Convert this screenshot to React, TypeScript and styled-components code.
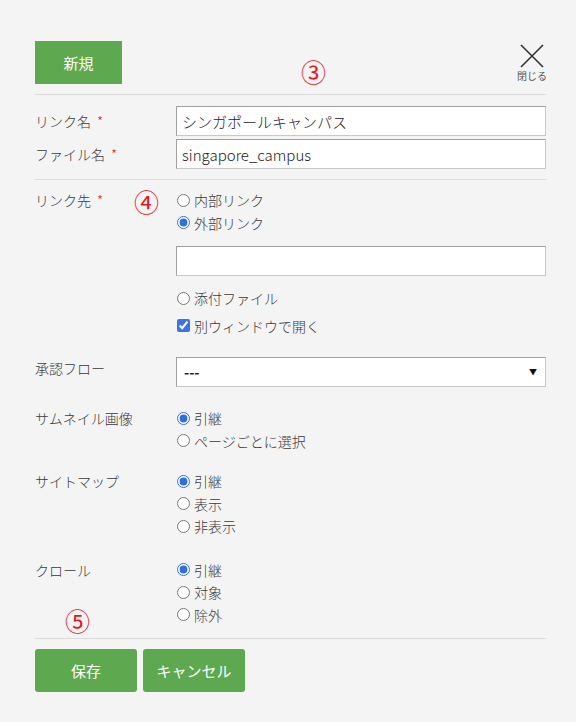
import styled, { createGlobalStyle } from 'styled-components';

const GlobalStyle = createGlobalStyle`
  html, body {
    margin: 0;
    padding: 0;
    background: #f4f4f4;
  }
  body {
    font-family: "Noto Sans CJK JP", "Noto Sans", sans-serif;
    font-weight: 300;
    color: #3a3a3a;
  }
`;

interface RadioGroupProps {
  name: string;
  options: string[];
  checked: number;
}

const RadioGroup: React.FC<RadioGroupProps> = ({ name, options, checked }) => (
  <OptionList>
    {options.map((opt, i) => (
      <OptionLabel key={opt}>
        <Radio type='radio' name={name} defaultChecked={i === checked} />
        {opt}
      </OptionLabel>
    ))}
  </OptionList>
);

const App: React.FC = () => {
  return (
    <Page>
      <GlobalStyle />
      <Header>
        <NewButton type='button'>新規</NewButton>
        <Close type='button'>
          <svg width='26' height='24' viewBox='0 0 26 24'>
            <path d='M2 1 L24 23 M24 1 L2 23' stroke='#333' strokeWidth='1.6' fill='none' />
          </svg>
          <CloseText>閉じる</CloseText>
        </Close>
        <Marker style={{ left: 266, top: 18 }}>③</Marker>
      </Header>

      <Section>
        <FieldRow>
          <Label>
            リンク名<Required>*</Required>
          </Label>
          <TextInput defaultValue='シンガポールキャンパス' />
        </FieldRow>
        <FieldRow>
          <Label>
            ファイル名<Required>*</Required>
          </Label>
          <TextInput defaultValue='singapore_campus' />
        </FieldRow>
      </Section>

      <Section $last>
        <Row $gap={9}>
          <Label $plain>
            リンク先<Required>*</Required>
          </Label>
          <Content>
            <RadioGroup name='link' options={['内部リンク', '外部リンク']} checked={1} />
            <TextInput $spaced />
            <OptionLabel>
              <Radio type='radio' name='link' />
              添付ファイル
            </OptionLabel>
            <CheckLabel>
              <Check type='checkbox' defaultChecked />
              別ウィンドウで開く
            </CheckLabel>
          </Content>
          <Marker style={{ left: 99, top: 0 }}>④</Marker>
        </Row>

        <Row $gap={20}>
          <Label $plain>承認フロー</Label>
          <SelectWrap>
            <Select defaultValue='---'>
              <option>---</option>
            </Select>
          </SelectWrap>
        </Row>

        <Row $gap={20}>
          <Label $plain>サムネイル画像</Label>
          <RadioGroup name='thumb' options={['引継', 'ページごとに選択']} checked={0} />
        </Row>

        <Row $gap={18}>
          <Label $plain>サイトマップ</Label>
          <RadioGroup name='sitemap' options={['引継', '表示', '非表示']} checked={0} />
        </Row>

        <Row $gap={21}>
          <Label $plain>クロール</Label>
          <RadioGroup name='crawl' options={['引継', '対象', '除外']} checked={0} />
          <Marker style={{ left: 30, top: 49 }}>⑤</Marker>
        </Row>
      </Section>

      <Footer>
        <ActionButton type='button'>保存</ActionButton>
        <ActionButton type='button'>キャンセル</ActionButton>
      </Footer>
    </Page>
  );
};

export default App;

const Page = styled.div`
  padding: 41px 30px 30px 35px;
`;

const Header = styled.div`
  position: relative;
  display: flex;
  justify-content: space-between;
  align-items: flex-start;
  padding-bottom: 10px;
  border-bottom: 1px solid #dcdcdc;
`;

const NewButton = styled.button`
  width: 87px;
  height: 43px;
  border: none;
  border-radius: 0;
  background: #5ea84f;
  color: #fff;
  font-family: inherit;
  font-weight: 400;
  font-size: 15px;
  cursor: pointer;
`;

const Close = styled.button`
  display: flex;
  flex-direction: column;
  align-items: center;
  margin-top: 3px;
  margin-right: -1px;
  padding: 0;
  border: none;
  background: none;
  cursor: pointer;
`;

const CloseText = styled.span`
  margin-top: 2px;
  font-family: "Noto Sans CJK JP", sans-serif;
  font-size: 10px;
  color: #555;
  line-height: 12px;
`;

const Marker = styled.span`
  position: absolute;
  font-family: "Noto Sans CJK JP", sans-serif;
  font-weight: 400;
  font-size: 25px;
  line-height: 25px;
  color: #e8141b;
`;

const Section = styled.div<{ $last?: boolean }>`
  display: flex;
  flex-direction: column;
  gap: ${(p) => (p.$last ? '0' : '3px')};
  padding: ${(p) => (p.$last ? '0 0 12px' : '11px 0 10px')};
  border-bottom: 1px solid #dcdcdc;
`;

const FieldRow = styled.div`
  display: grid;
  grid-template-columns: 141px 1fr;
  align-items: center;
`;

const Row = styled.div<{ $gap: number }>`
  position: relative;
  display: grid;
  grid-template-columns: 141px 1fr;
  align-items: start;
  margin-top: ${(p) => p.$gap}px;
`;

const Label = styled.div<{ $plain?: boolean }>`
  font-size: 14px;
  line-height: 22px;
  color: #3a3a3a;
  align-self: ${(p) => (p.$plain ? 'start' : 'center')};
`;

const Required = styled.span`
  color: #d9262b;
  margin-left: 6px;
`;

const Content = styled.div`
  display: flex;
  flex-direction: column;
`;

const OptionList = styled.div`
  display: flex;
  flex-direction: column;
`;

const OptionLabel = styled.label`
  display: flex;
  align-items: center;
  font-size: 14px;
  line-height: 22.5px;
  color: #3a3a3a;
`;

const Radio = styled.input`
  width: 13px;
  height: 13px;
  margin: 0 4px 0 1px;
  accent-color: #2f6fe0;
`;

const CheckLabel = styled(OptionLabel)`
  margin-top: 5px;
`;

const Check = styled.input`
  width: 13px;
  height: 13px;
  margin: 0 4px 0 1px;
  accent-color: #3a73e6;
`;

const TextInput = styled.input<{ $spaced?: boolean }>`
  box-sizing: border-box;
  width: 100%;
  height: 30px;
  margin: ${(p) => (p.$spaced ? '12px 0 11px' : '0')};
  padding: 0 5px;
  border: 1px solid #a0a0a0;
  border-right-color: #c8c8c8;
  border-bottom-color: #c8c8c8;
  background: #fff;
  font-family: "Noto Sans CJK JP", "Noto Sans", sans-serif;
  font-weight: 300;
  font-size: 15px;
  color: #222;
  outline: none;
`;

const SelectWrap = styled.div`
  position: relative;
  &::after {
    content: '▼';
    position: absolute;
    right: 9px;
    top: 9px;
    font-size: 8px;
    color: #111;
    pointer-events: none;
  }
`;

const Select = styled.select`
  box-sizing: border-box;
  width: 100%;
  height: 30px;
  padding: 0 7px;
  border: 1px solid #a0a0a0;
  border-right-color: #c8c8c8;
  border-bottom-color: #c8c8c8;
  border-radius: 0;
  background: #fff;
  appearance: none;
  font-family: "Noto Sans CJK JP", sans-serif;
  font-size: 14px;
  font-weight: bold;
  color: #222;
`;

const Footer = styled.div`
  display: flex;
  gap: 6px;
  padding-top: 10px;
`;

const ActionButton = styled.button`
  width: 102px;
  height: 43px;
  border: none;
  border-radius: 3px;
  background: #5ea84f;
  color: #fff;
  font-family: "Noto Sans CJK JP", sans-serif;
  font-weight: 400;
  font-size: 15px;
  cursor: pointer;
`;
